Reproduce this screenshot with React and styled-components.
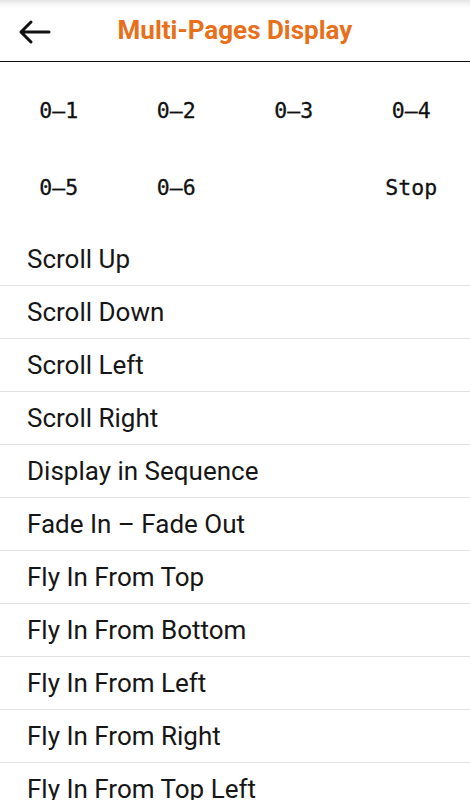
import React from 'react';
import styled, { createGlobalStyle } from 'styled-components';

const GlobalStyle = createGlobalStyle`
  html, body {
    margin: 0;
    padding: 0;
    background: #ffffff;
    overflow: hidden;
  }
`;

const Page = styled.div`
  width: 470px;
  background: #ffffff;
  font-family: Roboto, "Liberation Sans", sans-serif;
`;

const Header = styled.header`
  position: relative;
  height: 61px;
  display: flex;
  align-items: center;
  justify-content: center;
  border-bottom: 1.5px solid #111111;
  background: linear-gradient(#e4e4e4 0px, #f8f8f8 5px, #ffffff 9px);
`;

const BackButton = styled.button`
  position: absolute;
  left: 15px;
  top: 15px;
  width: 38px;
  height: 34px;
  padding: 0;
  border: none;
  background: none;
  display: flex;
  align-items: center;
  justify-content: center;
  cursor: pointer;
`;

const Title = styled.h1`
  margin: 0;
  margin-top: -2px;
  font-size: 26px;
  font-weight: 700;
  color: #e8701a;
`;

const PageGrid = styled.div`
  display: grid;
  grid-template-columns: repeat(4, 1fr);
  grid-auto-rows: 77px;
  padding: 10px 0 7px;
`;

const PageCell = styled.button`
  border: none;
  background: none;
  padding: 0;
  display: flex;
  align-items: center;
  justify-content: center;
  font-family: "DejaVu Sans Mono", "Liberation Mono", monospace;
  font-size: 21.5px;
  color: #111111;
  -webkit-text-stroke: 0.3px #111111;
  cursor: pointer;
  visibility: ${(p) => (p.$empty ? 'hidden' : 'visible')};
`;

const List = styled.ul`
  list-style: none;
  margin: 0;
  padding: 0;
`;

const Item = styled.li`
  height: 53px;
  display: flex;
  align-items: center;
  padding-left: 27px;
  padding-bottom: 1px;
  box-sizing: border-box;
  font-size: 26px;
  font-weight: 400;
  color: #161616;
  border-bottom: 1px solid #e2e2e2;
`;

const cells = ['0–1', '0–2', '0–3', '0–4', '0–5', '0–6', '', 'Stop'];

const effects = [
  'Scroll Up',
  'Scroll Down',
  'Scroll Left',
  'Scroll Right',
  'Display in Sequence',
  'Fade In – Fade Out',
  'Fly In From Top',
  'Fly In From Bottom',
  'Fly In From Left',
  'Fly In From Right',
  'Fly In From Top Left',
];

const App = () => {
  return (
    <Page>
      <GlobalStyle />
      <Header>
        <BackButton aria-label="Back">
          <svg width="34" height="26" viewBox="0 0 34 26" fill="none">
            <path
              d="M32 13H4M14 3L4 13l10 10"
              stroke="#111"
              strokeWidth="3"
              strokeLinecap="round"
              strokeLinejoin="round"
            />
          </svg>
        </BackButton>
        <Title>Multi-Pages Display</Title>
      </Header>
      <PageGrid>
        {cells.map((c, i) => (
          <PageCell key={i} $empty={!c}>
            {c || '-'}
          </PageCell>
        ))}
      </PageGrid>
      <List>
        {effects.map((e) => (
          <Item key={e}>{e}</Item>
        ))}
      </List>
    </Page>
  );
};

export default App;
